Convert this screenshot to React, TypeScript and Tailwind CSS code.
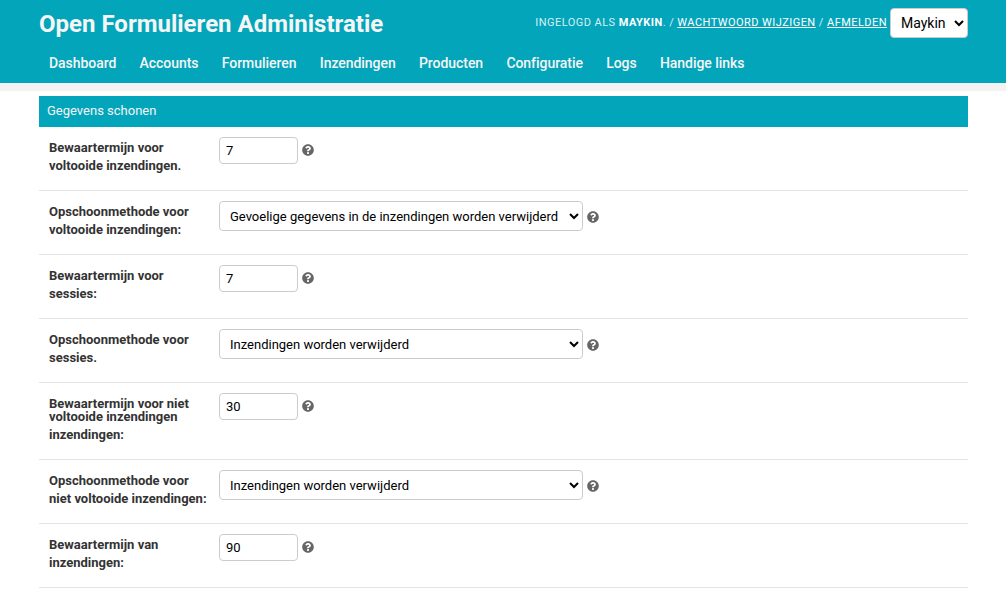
import { FaQuestionCircle } from 'react-icons/fa';

const NAV_ITEMS = ['Dashboard', 'Accounts', 'Formulieren', 'Inzendingen', 'Producten', 'Configuratie', 'Logs', 'Handige links'];

function Help() {
    return <FaQuestionCircle className="ml-[4px] w-[12px] h-[12px] text-[#666] shrink-0" />;
}

function NumberRow({ label, value }: { label: React.ReactNode; value: string }) {
    return (
        <div className="flex border-b border-[#e4e4e4] pt-[10px] pb-[15px] px-[10px]">
            <div className="w-[170px] pr-[10px] pt-[2px] text-[13px] leading-[18px] font-bold text-[#333]">{label}</div>
            <div className="flex items-start">
                <input
                    readOnly
                    value={value}
                    className="w-[79px] h-[27px] px-[6px] border border-[#ccc] rounded-[4px] bg-white text-[13px] text-black outline-none"
                />
                <div className="h-[27px] flex items-center pb-[1px]">
                    <Help />
                </div>
            </div>
        </div>
    );
}

function SelectRow({ label, value }: { label: React.ReactNode; value: string }) {
    return (
        <div className="flex border-b border-[#e4e4e4] pt-[10px] pb-[15px] px-[10px]">
            <div className="w-[170px] pr-[10px] pt-[2px] text-[13px] leading-[18px] font-bold text-[#333]">{label}</div>
            <div className="flex items-start">
                <select
                    defaultValue={value}
                    className="w-[364px] h-[30px] pl-[6px] border border-[#ccc] rounded-[4px] bg-white text-[13px] text-black outline-none appearance-auto"
                >
                    <option>Gevoelige gegevens in de inzendingen worden verwijderd</option>
                    <option>Inzendingen worden verwijderd</option>
                </select>
                <div className="h-[30px] flex items-center pt-[1px]">
                    <Help />
                </div>
            </div>
        </div>
    );
}

export default function App() {
    return (
        <div className="min-h-[605px] bg-white font-['Roboto',sans-serif] overflow-hidden">
            <div className="h-[83px] bg-[#03a5bb] pl-[39px] pr-[38px]">
                <div className="flex items-start justify-between h-[45px]">
                    <h1 className="pt-[9px] text-[24px] leading-[30px] font-bold text-[#f5f5f5]">Open Formulieren Administratie</h1>
                    <div className="flex items-center pt-[8px]">
                        <div className="text-[11px] leading-[14px] tracking-[0.45px] text-[#d5f0f4] uppercase">
                            Ingelogd als <strong className="font-bold text-white">Maykin</strong>. /{' '}
                            <a className="underline text-white">Wachtwoord wijzigen</a> / <a className="underline text-white">Afmelden</a>
                        </div>
                        <select className="ml-[3px] w-[78px] h-[30px] pl-[6px] rounded-[4px] border border-[#ccc] bg-white text-[14px] text-black outline-none appearance-auto">
                            <option>Maykin</option>
                        </select>
                    </div>
                </div>
                <nav className="flex items-center h-[38px] pb-[1px]">
                    {NAV_ITEMS.map(item => (
                        <a key={item} className="px-[10px] mr-[3.3px] text-[14px] tracking-[-0.05px] font-medium text-[#f5f5f5]">
                            {item}
                        </a>
                    ))}
                </nav>
            </div>
            <div className="h-[8px] bg-[#f3f3f3]" />
            <div className="pl-[39px] pr-[38px] pt-[5px]">
                <h2 className="h-[31px] px-[8px] pb-[1px] flex items-center bg-[#03a5bb] text-[13px] font-normal text-[#f5f5f5]">Gegevens schonen</h2>
                <NumberRow label={<>Bewaartermijn voor voltooide inzendingen.</>} value="7" />
                <SelectRow label={<>Opschoonmethode voor voltooide inzendingen:</>} value="Gevoelige gegevens in de inzendingen worden verwijderd" />
                <NumberRow label={<>Bewaartermijn voor sessies:</>} value="7" />
                <SelectRow label={<>Opschoonmethode voor sessies.</>} value="Inzendingen worden verwijderd" />
                <NumberRow
                    label={
                        <>
                            <span className="block leading-[13px] pt-[2px]">Bewaartermijn voor niet voltooide inzendingen</span>
                            <span className="block mt-[3px]">inzendingen:</span>
                        </>
                    }
                    value="30"
                />
                <SelectRow label={<>Opschoonmethode voor niet voltooide inzendingen:</>} value="Inzendingen worden verwijderd" />
                <NumberRow label={<>Bewaartermijn van inzendingen:</>} value="90" />
            </div>
        </div>
    );
}
